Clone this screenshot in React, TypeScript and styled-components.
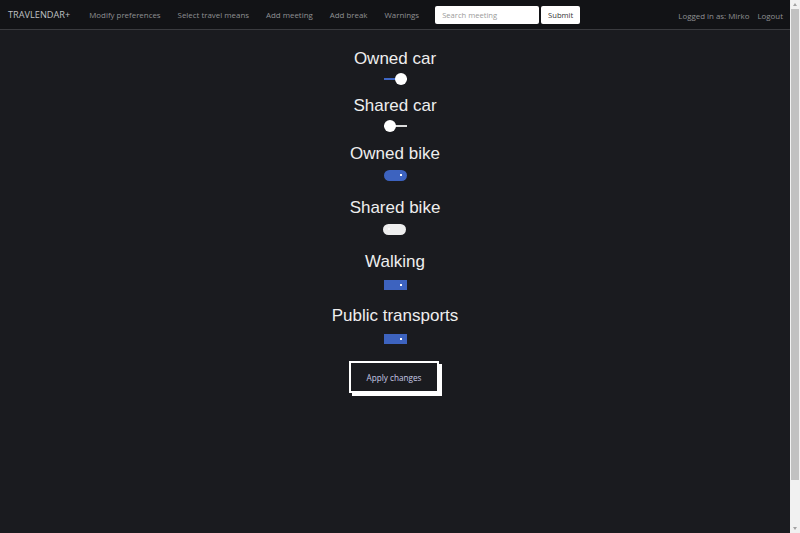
import * as React from 'react'
import styled, { createGlobalStyle } from 'styled-components'

const GlobalStyle = createGlobalStyle`
  html, body {
    margin: 0;
    height: 100%;
    background: #1a1b1f;
    font-family: "Open Sans", "Noto Sans", Arial, sans-serif;
  }
`

// the window: page area plus the browser's scroll bar at the right
const Frame = styled.div`
  display: flex;
  height: 100vh;
  overflow: hidden;
`

const Page = styled.div`
  flex: 1;
  min-width: 0;
  background: #1a1b1f;
`

const ScrollBar = styled.div`
  width: 10px;
  display: flex;
  flex-direction: column;
  align-items: center;
  background: #f1f1f1;
`

const ScrollArrow = styled.div<{ $down?: boolean }>`
  height: 9px;
  display: flex;
  align-items: center;
  justify-content: center;
  &::before {
    content: '';
    border-left: 2.5px solid transparent;
    border-right: 2.5px solid transparent;
    ${(p) => (p.$down ? 'border-top: 3px solid #a3a3a3;' : 'border-bottom: 3px solid #a3a3a3;')}
  }
`

const ScrollThumb = styled.div`
  width: 8px;
  height: 471px;
  background: #c1c1c1;
`

const ScrollSpace = styled.div`
  flex: 1;
`

const Nav = styled.nav`
  display: flex;
  align-items: center;
  height: 29px;
  padding: 0 7px 0 8px;
  background: #121316;
  border-bottom: 1px solid #3a3b3f;
  font-size: 7.9px;
`

const Brand = styled.span`
  color: #bfc0c2;
  font-size: 9.2px;
  margin-right: 19px;
`

const NavLinks = styled.div`
  display: flex;
  gap: 17px;
`

const NavLink = styled.span`
  color: #8f9093;
`

const SearchForm = styled.form`
  display: flex;
  gap: 2px;
  margin-left: 16px;
`

const SearchInput = styled.input`
  width: 104px;
  height: 18px;
  box-sizing: border-box;
  border: none;
  border-radius: 2px;
  padding: 0 7px;
  font-family: inherit;
  font-size: 7.6px;
  background: #fff;
  &::placeholder {
    color: #9a9a9a;
  }
`

const SubmitButton = styled.button`
  width: 39px;
  height: 18px;
  border: none;
  border-radius: 2px;
  background: #fff;
  color: #333;
  font-family: inherit;
  font-size: 7.6px;
  padding: 0;
`

const UserArea = styled.div`
  margin-left: auto;
  display: flex;
  gap: 8px;
  padding-top: 3px;
`

const Main = styled.main`
  display: flex;
  flex-direction: column;
  align-items: center;
  padding-top: 19px;
`

const Option = styled.div<{ $gap: number }>`
  display: flex;
  flex-direction: column;
  align-items: center;
  margin-bottom: ${(p) => p.$gap}px;
`

const Label = styled.h3`
  margin: 0;
  font-family: "Liberation Sans", Arial, sans-serif;
  font-weight: normal;
  font-size: 17px;
  line-height: 20px;
  color: #eeeeee;
`

const SliderTrack = styled.div<{ $on: boolean }>`
  position: relative;
  width: 23px;
  height: 12px;
  margin-top: 4px;
  margin-left: 1px;
  &::before {
    content: '';
    position: absolute;
    left: 0;
    right: 0;
    top: 5px;
    height: 2px;
    background: ${(p) => (p.$on ? 'linear-gradient(to right, #3f67c4 0 60%, #e0e0e0 60%)' : '#dcdcdc')};
  }
  &::after {
    content: '';
    position: absolute;
    top: 0;
    left: ${(p) => (p.$on ? 11 : 0)}px;
    width: 12px;
    height: 12px;
    border-radius: 50%;
    background: #fff;
  }
`

const Switch = styled.div<{ $on: boolean; $square?: boolean }>`
  position: relative;
  width: 23px;
  height: ${(p) => (p.$square ? 10 : 11)}px;
  margin-top: ${(p) => (p.$square ? 8 : 6)}px;
  border-radius: ${(p) => (p.$square ? 0 : 6)}px;
  background: ${(p) => (p.$on ? '#3d63bf' : '#eeeeee')};
  &::after {
    content: '';
    position: absolute;
    top: 4px;
    left: ${(p) => (p.$on ? 16 : 5)}px;
    width: 2px;
    height: 2px;
    background: ${(p) => (p.$on ? '#fff' : '#fafafa')};
  }
`

const ApplyButton = styled.button`
  margin-top: 17px;
  margin-right: 2px;
  width: 90px;
  height: 32px;
  background: #1a1b1f;
  border: 2px solid #fff;
  box-shadow: 3px 3px 0 #fff;
  color: #c7c9e6;
  font-family: "Open Sans", "Noto Sans", Arial, sans-serif;
  font-size: 8.2px;
  padding: 0;
`

export default function App() {
  return (
    <Frame>
      <GlobalStyle />
      <Page>
        <Nav>
          <Brand>TRAVLENDAR+</Brand>
          <NavLinks>
            <NavLink>Modify preferences</NavLink>
            <NavLink>Select travel means</NavLink>
            <NavLink>Add meeting</NavLink>
            <NavLink>Add break</NavLink>
            <NavLink>Warnings</NavLink>
          </NavLinks>
          <SearchForm onSubmit={(e) => e.preventDefault()}>
            <SearchInput placeholder="Search meeting" />
            <SubmitButton type="submit">Submit</SubmitButton>
          </SearchForm>
          <UserArea>
            <NavLink>Logged in as: Mirko</NavLink>
            <NavLink>Logout</NavLink>
          </UserArea>
        </Nav>
        <Main>
          <Option $gap={11}>
            <Label>Owned car</Label>
            <SliderTrack $on={true} />
          </Option>
          <Option $gap={12}>
            <Label>Shared car</Label>
            <SliderTrack $on={false} />
          </Option>
          <Option $gap={17}>
            <Label>Owned bike</Label>
            <Switch $on={true} />
          </Option>
          <Option $gap={17}>
            <Label>Shared bike</Label>
            <Switch $on={false} />
          </Option>
          <Option $gap={16}>
            <Label>Walking</Label>
            <Switch $on={true} $square />
          </Option>
          <Option $gap={0}>
            <Label>Public transports</Label>
            <Switch $on={true} $square />
          </Option>
          <ApplyButton>Apply changes</ApplyButton>
        </Main>
      </Page>
      <ScrollBar>
        <ScrollArrow />
        <ScrollThumb />
        <ScrollSpace />
        <ScrollArrow $down />
      </ScrollBar>
    </Frame>
  )
}
